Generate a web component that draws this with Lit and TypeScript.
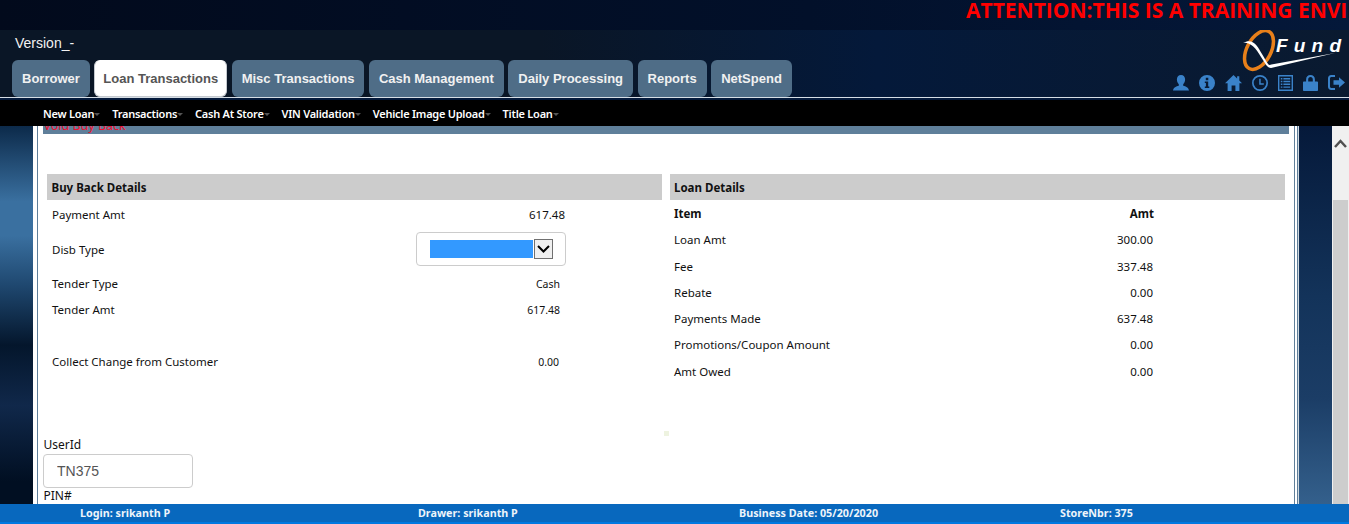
import { LitElement, html, css, svg } from 'lit';
import { customElement } from 'lit/decorators.js';

const TABS = ['Borrower', 'Loan Transactions', 'Misc Transactions', 'Cash Management', 'Daily Processing', 'Reports', 'NetSpend'];
const MENU = ['New Loan', 'Transactions', 'Cash At Store', 'VIN Validation', 'Vehicle Image Upload', 'Title Loan'];
const LOAN_ROWS = [
  ['Loan Amt', '300.00'],
  ['Fee', '337.48'],
  ['Rebate', '0.00'],
  ['Payments Made', '637.48'],
  ['Promotions/Coupon Amount', '0.00'],
  ['Amt Owed', '0.00'],
];

const ICONS = [
  // user
  svg`<path d="M8 0c2.6 0 4.1 2 4.1 4.6 0 2-.9 3.7-1.9 4.7v1.4c2.6.7 5.3 1.6 5.8 4.8H0c.5-3.2 3.200-4.100 5.800-4.800V9.300C4.800 8.300 3.900 6.600 3.900 4.600 3.900 2 5.400 0 8 0z"/>`,
  // info
  svg`<path fill-rule="evenodd" d="M8 0a8 8 0 1 1 0 16A8 8 0 0 1 8 0zM6.800 2.800v2.400h2.500V2.800zM5.800 6.600v1.500h1.100v3.300H5.800v1.500h4.500v-1.500H9.200V6.600z"/>`,
  // home
  svg`<path d="M8.500 0l3.600 3.500V1.200h2.200v4.400L17 8.200h-2.600V16h-4V10.500H6.600V16h-4V8.200H0z"/>`,
  // clock
  svg`<path fill-rule="evenodd" d="M8 0a8 8 0 1 1 0 16A8 8 0 0 1 8 0zm0 1.700a6.300 6.300 0 1 0 0 12.600A6.300 6.300 0 0 0 8 1.700zM7.200 3.800h1.500v4.400h3.100v1.500H7.200z"/>`,
  // list
  svg`<path fill-rule="evenodd" d="M0 0h15v16H0zM1.400 1.400v13.200h12.200V1.400zM2.800 3h1.600v1.400H2.800zM5.400 3h6.800v1.400H5.400zM2.800 5.800h1.600v1.400H2.800zM5.400 5.800h6.800v1.400H5.400zM2.800 8.600h1.600V10H2.800zM5.400 8.600h6.800V10H5.400zM2.800 11.400h1.600v1.400H2.800zM5.400 11.400h6.800v1.400H5.400z"/>`,
  // lock
  svg`<path fill-rule="evenodd" d="M7.500 0c2.700 0 4.400 1.800 4.400 4.400V6.500h2.300c.5 0 .8.300.8.800v7.900c0 .5-.3.800-.8.800H.8c-.5 0-.8-.3-.8-.8V7.300c0-.5.300-.8.800-.8h2.300V4.400C3.100 1.800 4.800 0 7.500 0zm0 2C6 2 5.200 3 5.200 4.500v2h4.600v-2C9.800 3 9 2 7.500 2z"/>`,
  // sign out
  svg`<path d="M7 0v2H3.500C2.600 2 2 2.600 2 3.500v8c0 .9.600 1.500 1.500 1.500H7v2H3.200C1.300 15 0 13.700 0 11.800V3.200C0 1.300 1.300 0 3.200 0z"/><path d="M11 2.300L17 7.500 11 12.700V9.700H5.500V5.300H11z"/>`,
];
const ICON_BOXES = [[16, 16], [16, 16], [17, 16], [16, 16], [15, 16], [15, 16], [17, 15]];

@customElement('app-root')
export class AppRoot extends LitElement {
  static styles = css`
    :host {
      display: flex;
      flex-direction: column;
      height: 524px;
      overflow: hidden;
      font-family: 'Noto Sans', sans-serif;
      font-size: 11.500px;
      color: #111;
    }
    .header {
      height: 97px;
      flex: none;
      display: flex;
      flex-direction: column;
      background: linear-gradient(90deg, #0a1626 0%, #0a1626 40%, #04193a 65%, #0a1a30 100%);
    }
    .attention {
      height: 30px;
      flex: none;
      box-sizing: border-box;
      padding: 0 0 0 966px;
      overflow: hidden;
      white-space: nowrap;
      background: linear-gradient(90deg, #020a1c, #02102a 60%, #04183a);
      color: #f00;
      font: bold 21px/20px 'Open Sans', sans-serif;
    }
    .head-main {
      flex: 1;
      display: flex;
      justify-content: space-between;
    }
    .version {
      height: 30px;
      padding-left: 15px;
      color: #f2f2f2;
      font: 14px/27px 'Liberation Sans', sans-serif;
    }
    .tabs {
      display: flex;
      gap: 4.500px;
      padding-left: 12px;
    }
    .tab {
      height: 37px;
      box-sizing: border-box;
      padding: 0 10px;
      border-radius: 6px;
      background: #4f6d87;
      color: #f1f1f1;
      font: bold 13px/37px 'Liberation Sans', sans-serif;
      white-space: nowrap;
    }
    .tab.active {
      background: #fff;
      color: #555;
      border: 1px solid #c4c9cf;
      border-top-color: #fff;
      padding: 0 8px;
      line-height: 35px;
    }
    .brand {
      width: 190px;
      display: flex;
      flex-direction: column;
      align-items: flex-end;
    }
    .logo {
      display: block;
      width: 110px;
      height: 46px;
      margin-bottom: -1px;
    }
    .icons {
      display: flex;
      gap: 10px;
      padding-right: 4px;
    }
    .icons svg {
      display: block;
      fill: #3a82c9;
    }
    .rule {
      height: 1px;
      flex: none;
      background: #d5dde5;
      border-bottom: 2px solid #04193a;
    }
    .menu {
      height: 26px;
      flex: none;
      display: flex;
      gap: 18px;
      padding-left: 43px;
      background: #000;
      color: #fff;
      font-size: 11px;
      font-weight: 600;
      letter-spacing: -0.250px;
      line-height: 27px;
    }
    .menu span {
      position: relative;
      white-space: nowrap;
    }
    .menu span::after {
      content: '';
      position: absolute;
      left: 100%;
      top: 13px;
      border: 3px solid transparent;
      border-top: 3px solid #555;
    }
    .main {
      flex: 1;
      min-height: 0;
      display: flex;
    }
    .side-left {
      width: 33px;
      flex: none;
      background: linear-gradient(180deg, #0c2a4a 0%, #3a70a0 20%, #3a70a0 29%, #1f4870 42%, #04162c 58%, #10284a 74%, #010f22 94%);
    }
    .side-right {
      width: 33px;
      flex: none;
      background: linear-gradient(180deg, #05193a 0%, #13335a 45%, #1b3d66 72%, #34608c 100%);
    }
    .frame {
      flex: 1;
      min-width: 0;
      background: #fff;
      padding-left: 3.500px;
      padding-right: 3.700px;
      display: flex;
    }
    .frame-inner {
      flex: 1;
      min-width: 0;
      border-left: 1px solid #5f7f9a;
      border-right: 1px solid #5f7f9a;
      box-shadow: 2px 0 0 #fff, 3.300px 0 0 #5f7f9a;
      overflow: hidden;
      position: relative;
    }
    .title-bar {
      height: 20px;
      margin: -12px 5px 0 5.500px;
      padding-left: 0.500px;
      background: #5f7f9a;
      color: #f01030;
      font-size: 12.500px;
      line-height: 24px;
    }
    .columns {
      display: grid;
      grid-template-columns: 615px 615px;
      column-gap: 8px;
      padding: 40px 0 0 9.500px;
      height: 262px;
    }
    .head {
      height: 26px;
      padding-left: 4.500px;
      background: #ccc;
      font-weight: 700;
      line-height: 27px;
    }
    .right .head { padding-left: 4px; }
    .row {
      display: flex;
      justify-content: space-between;
      padding-left: 5px;
      height: 26.300px;
      line-height: 28px;
      white-space: nowrap;
    }
    .left .row { padding-right: 102px; }
    .left .row.first { height: 28px; line-height: 30px; padding-right: 97px; }
    .left .row.select-row { height: 42px; align-items: center; padding-right: 96px; }
    .left .row.select-row span { padding-top: 2px; line-height: 20px; }
    .left .row.gap { margin-top: 25px; padding-right: 103px; }
    .right .row { padding-left: 4px; padding-right: 132px; }
    .right .row.bold { font-weight: 700; padding-right: 131px; }
    .small { font-size: 10.500px; }
    .cash { font-size: 10.500px; }
    .select {
      width: 150px;
      height: 34px;
      box-sizing: border-box;
      border: 1px solid #ccc;
      border-radius: 4px;
      display: flex;
      align-items: center;
      padding-left: 13px;
    }
    .select i {
      display: block;
      width: 103px;
      height: 18px;
      background: #39f;
    }
    .select b {
      display: flex;
      align-items: center;
      justify-content: center;
      width: 19px;
      height: 20px;
      box-sizing: border-box;
      margin-left: 1px;
      border: 1px solid #707070;
      background: #f0f0f0;
    }
    .user {
      padding: 0 0 0 6px;
      line-height: 18px;
      font-size: 12px;
    }
    .user input {
      display: block;
      width: 150px;
      height: 34px;
      box-sizing: border-box;
      margin: 0 0 0 -0.500px;
      padding: 0 13px;
      border: 1px solid #ccc;
      border-radius: 4px;
      color: #555;
      font: 14px 'Liberation Sans', sans-serif;
      outline: none;
    }
    .user label {
      display: block;
      line-height: 16px;
    }
    .speck {
      position: absolute;
      left: 626px;
      top: 305px;
      width: 5px;
      height: 5px;
      background: #eef3e0;
    }
    .scrollbar {
      width: 17px;
      flex: none;
      box-sizing: border-box;
      padding-left: 1px;
      padding-right: 1px;
      display: flex;
      flex-direction: column;
      background: #f0f0f0;
    }
    .arrow {
      height: 74px;
      flex: none;
      display: flex;
      justify-content: center;
      padding-top: 13px;
      box-sizing: border-box;
    }
    .thumb {
      flex: 1;
      background: #cdcdcd;
    }
    .footer {
      height: 20px;
      flex: none;
      box-sizing: border-box;
      display: grid;
      grid-template-columns: 338px 321px 321px auto;
      padding-left: 80px;
      background: #0868be;
      border-bottom: 2px solid #0078e0;
      color: #eef4fa;
      font-size: 10.750px;
      font-weight: 700;
      line-height: 18px;
    }
  `;

  render() {
    return html`
      <div class="header">
        <div class="attention">ATTENTION:THIS IS A TRAINING ENVIRONMENT</div>
        <div class="head-main">
          <div>
            <div class="version">Version_-</div>
            <div class="tabs">
              ${TABS.map((t, i) => html`<div class="tab ${i === 1 ? 'active' : ''}">${t}</div>`)}
            </div>
          </div>
          <div class="brand">
            <svg class="logo" viewBox="0 0 110 46">
              <ellipse cx="20" cy="20" rx="12" ry="21" transform="rotate(28 20 20)" fill="none" stroke="#e8801a" stroke-width="3.500"/>
              <path d="M4 13c10-6 15 4 19 11 3 5 5 9 7 11l66-12-64 15c-3 0-5-3-8-8C19 22 13 11 4 13z" fill="#fff"/>
              <text x="37" y="22" fill="#fff" font-family="Liberation Sans" font-size="19" font-weight="700" font-style="italic" letter-spacing="6.200">Fund</text>
            </svg>
            <div class="icons">
              ${ICONS.map((p, i) => html`<svg width=${ICON_BOXES[i][0]} height=${ICON_BOXES[i][1]} viewBox="0 0 ${ICON_BOXES[i][0]} ${ICON_BOXES[i][1]}">${p}</svg>`)}
            </div>
          </div>
        </div>
      </div>
      <div class="rule"></div>
      <div class="menu">${MENU.map((m) => html`<span>${m}</span>`)}</div>
      <div class="main">
        <div class="side-left"></div>
        <div class="frame">
          <div class="frame-inner">
            <div class="title-bar">Void Buy Back</div>
            <div class="columns">
              <div class="left">
                <div class="head">Buy Back Details</div>
                <div class="row first"><span>Payment Amt</span><span>617.48</span></div>
                <div class="row select-row">
                  <span>Disb Type</span>
                  <div class="select">
                    <i></i>
                    <b><svg width="13" height="8" viewBox="0 0 13 8"><path d="M1 1l5.500 5.500L12 1" fill="none" stroke="#000" stroke-width="2"/></svg></b>
                  </div>
                </div>
                <div class="row"><span>Tender Type</span><span class="cash">Cash</span></div>
                <div class="row"><span>Tender Amt</span><span class="small">617.48</span></div>
                <div class="row gap"><span>Collect Change from Customer</span><span class="small">0.00</span></div>
              </div>
              <div class="right">
                <div class="head">Loan Details</div>
                <div class="row bold"><span>Item</span><span>Amt</span></div>
                ${LOAN_ROWS.map((r) => html`<div class="row"><span>${r[0]}</span><span>${r[1]}</span></div>`)}
              </div>
            </div>
            <div class="user">
              UserId
              <input value="TN375" />
              <label>PIN#</label>
            </div>
            <div class="speck"></div>
          </div>
        </div>
        <div class="side-right"></div>
        <div class="scrollbar">
          <div class="arrow"><svg width="13" height="9" viewBox="0 0 13 9"><path d="M1 8l5.500-6L12 8" fill="none" stroke="#505050" stroke-width="2.500"/></svg></div>
          <div class="thumb"></div>
        </div>
      </div>
      <div class="footer">
        <span>Login: srikanth P</span>
        <span>Drawer: srikanth P</span>
        <span>Business Date: 05/20/2020</span>
        <span>StoreNbr: 375</span>
      </div>
    `;
  }
}
